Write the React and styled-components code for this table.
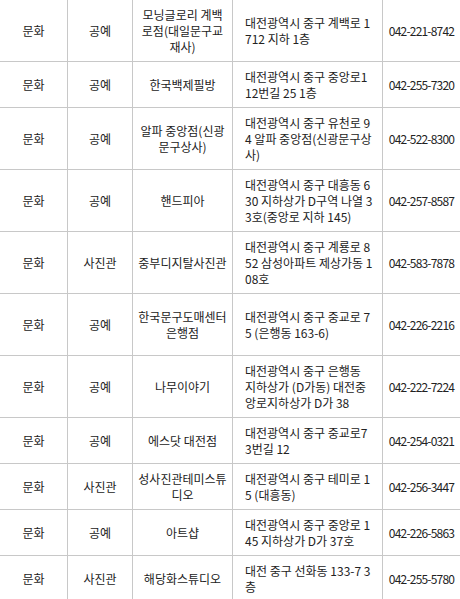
import React from "react";
import styled, { createGlobalStyle } from "styled-components";

const GlobalStyle = createGlobalStyle`
  html, body {
    margin: 0;
    padding: 0;
    background: #ffffff;
  }
  body {
    font-family: "Noto Sans CJK KR", "Noto Sans", sans-serif;
    font-size: 12px;
    color: #222222;
  }
`;

const Table = styled.div`
  width: 460px;
  margin-top: -1px;
  border-top: 1px solid #c8c8c8;
  overflow: hidden;
`;

const Row = styled.div`
  display: grid;
  grid-template-columns: 68px 65px 100px 150px 1fr;
  box-sizing: border-box;
  min-height: ${(p) => (p.$tall ? "62px" : "0")};
  border-bottom: 1px solid #c8c8c8;
`;

const Cell = styled.div`
  box-sizing: border-box;
  display: flex;
  flex-direction: column;
  justify-content: center;
  align-items: ${(p) => (p.$left ? "flex-start" : "center")};
  text-align: ${(p) => (p.$left ? "left" : "center")};
  padding: ${(p) => (p.$left ? "7px 2px 6px 12px" : "7px 1px 6px")};
  line-height: 16px;
  white-space: nowrap;
  border-right: 1px solid #c8c8c8;
`;

const PhoneCell = styled(Cell)`
  border-right: none;
  letter-spacing: -0.8px;
`;

const Line = styled.span`
  display: block;
`;

const rows = [
  ["문화", "공예", ["모닝글로리 계백", "로점(대일문구교", "재사)"], ["대전광역시 중구 계백로 1", "712 지하 1층"], "042-221-8742"],
  ["문화", "공예", ["한국백제필방"], ["대전광역시 중구 중앙로1", "12번길 25 1층"], "042-255-7320"],
  ["문화", "공예", ["알파 중앙점(신광", "문구상사)"], ["대전광역시 중구 유천로 9", "4 알파 중앙점(신광문구상", "사)"], "042-522-8300"],
  ["문화", "공예", ["핸드피아"], ["대전광역시 중구 대흥동 6", "30 지하상가 D구역 나열 3", "3호(중앙로 지하 145)"], "042-257-8587"],
  ["문화", "사진관", ["중부디지탈사진관"], ["대전광역시 중구 계룡로 8", "52 삼성아파트 제상가동 1", "08호"], "042-583-7878"],
  ["문화", "공예", ["한국문구도매센터", "은행점"], ["대전광역시 중구 중교로 7", "5 (은행동 163-6)"], "042-226-2216", true],
  ["문화", "공예", ["나무이야기"], ["대전광역시 중구 은행동", "지하상가 (D가동) 대전중", "앙로지하상가 D가 38"], "042-222-7224"],
  ["문화", "공예", ["에스닷 대전점"], ["대전광역시 중구 중교로7", "3번길 12"], "042-254-0321"],
  ["문화", "사진관", ["성사진관테미스튜", "디오"], ["대전광역시 중구 테미로 1", "5 (대흥동)"], "042-256-3447"],
  ["문화", "공예", ["아트샵"], ["대전광역시 중구 중앙로 1", "45 지하상가 D가 37호"], "042-226-5863"],
  ["문화", "사진관", ["해당화스튜디오"], ["대전 중구 선화동 133-7 3", "층"], "042-255-5780"],
];

const Lines = ({ items }) =>
  items.map((t, i) => <Line key={i}>{t}</Line>);

export default function App() {
  return (
    <>
      <GlobalStyle />
      <Table>
        {rows.map(([cat, type, name, addr, phone, tall], i) => (
          <Row key={i} $tall={tall}>
            <Cell>{cat}</Cell>
            <Cell>{type}</Cell>
            <Cell>
              <Lines items={name} />
            </Cell>
            <Cell $left>
              <Lines items={addr} />
            </Cell>
            <PhoneCell>{phone}</PhoneCell>
          </Row>
        ))}
      </Table>
    </>
  );
}
